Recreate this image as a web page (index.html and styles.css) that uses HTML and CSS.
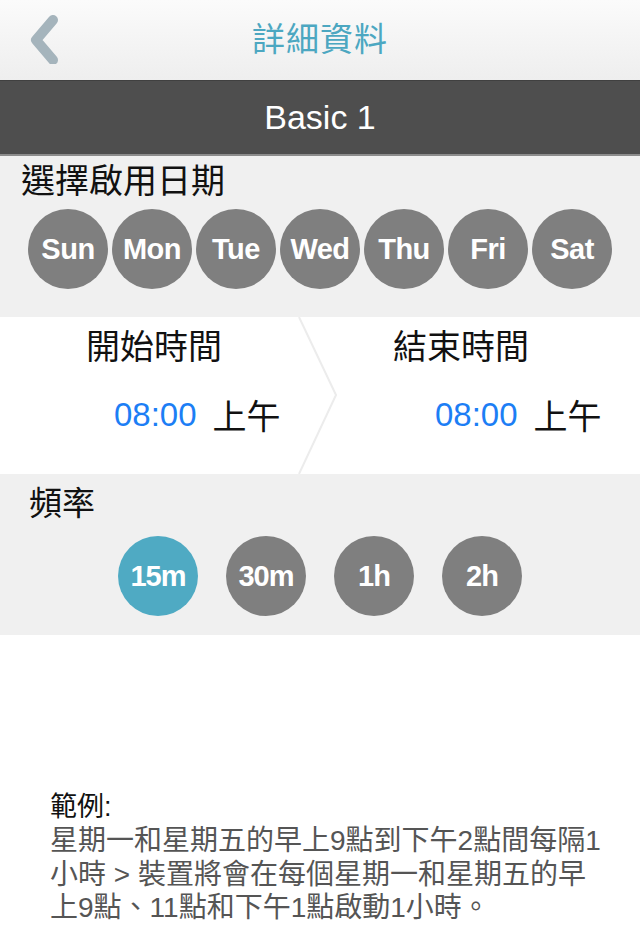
FILE: index.html
```html
<!DOCTYPE html>
<html lang="zh-Hant">
<head>
<meta charset="utf-8">
<title>詳細資料</title>
<link rel="stylesheet" href="styles.css">
</head>
<body>
<div class="screen">
  <header class="nav">
    <svg class="back" width="36" height="52" viewBox="0 0 36 52">
      <polyline points="27,8 10,28 27,48" fill="none" stroke="#a5b4bc" stroke-width="10" stroke-linecap="round" stroke-linejoin="round"/>
    </svg>
    <h1 class="nav-title">詳細資料</h1>
  </header>
  <div class="banner">Basic 1</div>

  <section class="days">
    <div class="label">選擇啟用日期</div>
    <div class="day-row">
      <span class="dot">Sun</span>
      <span class="dot">Mon</span>
      <span class="dot">Tue</span>
      <span class="dot">Wed</span>
      <span class="dot">Thu</span>
      <span class="dot">Fri</span>
      <span class="dot">Sat</span>
    </div>
  </section>

  <section class="times">
    <div class="col col-start">
      <div class="col-head">開始時間</div>
      <div class="time"><span class="hm">08:00</span><span class="ampm">上午</span></div>
    </div>
    <svg class="divider" width="40" height="157" viewBox="0 0 40 157">
      <polyline points="1,0 38,78 1,157" fill="none" stroke="#ececec" stroke-width="2"/>
    </svg>
    <div class="col col-end">
      <div class="col-head">結束時間</div>
      <div class="time"><span class="hm">08:00</span><span class="ampm">上午</span></div>
    </div>
  </section>

  <section class="freq">
    <div class="label label-freq">頻率</div>
    <div class="freq-row">
      <span class="dot active">15m</span>
      <span class="dot">30m</span>
      <span class="dot">1h</span>
      <span class="dot">2h</span>
    </div>
  </section>

  <section class="example">
    <div class="ex-title">範例:</div>
    <p class="ex-text">星期一和星期五的早上9點到下午2點間每隔1<br>小時 &gt; 裝置將會在每個星期一和星期五的早<br>上9點、11點和下午1點啟動1小時。</p>
  </section>
</div>
</body>
</html>
```

FILE: styles.css
```css
* { box-sizing: border-box; }
html, body { margin: 0; padding: 0; background: #fff; }
body {
  font-family: "Liberation Sans", "Noto Sans CJK TC", sans-serif;
  width: 640px;
  height: 938px;
  overflow: hidden;
}
.screen { width: 640px; }

.nav {
  position: relative;
  height: 80px;
  background: linear-gradient(#fbfbfb, #eeeeee);
  display: flex;
  align-items: center;
  justify-content: center;
}
.back { position: absolute; left: 26px; top: 12px; }
.nav-title {
  margin: 0 0 6px;
  font-weight: normal;
  font-size: 33px;
  color: #4ca7c1;
  font-family: "Noto Sans CJK TC", sans-serif;
  letter-spacing: 1px;
}

.banner {
  height: 76px;
  background: #4e4e4e;
  border-top: 1px solid #404040;
  border-bottom: 2px solid #8c8c8c;
  color: #fff;
  font-size: 34px;
  display: flex;
  align-items: center;
  justify-content: center;
}

.days {
  background: #f0f0f0;
  height: 161px;
  padding: 0 0 0 21px;
}
.label {
  font-family: "Noto Sans CJK TC", sans-serif;
  font-size: 34px;
  line-height: 46px;
  color: #111;
  padding-top: 0;
}
.day-row {
  display: flex;
  gap: 4px;
  padding-left: 7px;
  margin-top: 7px;
}
.dot {
  width: 80px;
  height: 80px;
  border-radius: 50%;
  background: #7f7f7f;
  color: #fff;
  font-weight: bold;
  font-size: 29px;
  display: flex;
  align-items: center;
  justify-content: center;
  letter-spacing: -0.5px;
}
.dot.active { background: #4faac3; }

.times {
  height: 157px;
  background: #fff;
  display: flex;
}
.col { display: flex; flex-direction: column; }
.col-start { width: 298px; padding-left: 86px; }
.col-end { flex: 1; padding-left: 55px; }
.divider { flex: none; }
.col-head {
  font-family: "Noto Sans CJK TC", sans-serif;
  font-size: 34px;
  line-height: 46px;
  color: #111;
  margin-top: 5px;
}
.time {
  display: flex;
  align-items: center;
  gap: 16px;
  margin-top: 22px;
}
.col-start .time { padding-left: 28px; }
.col-end .time { padding-left: 42px; }
.hm { color: #1c7ef5; font-size: 33px; }
.ampm {
  font-family: "Noto Sans CJK TC", sans-serif;
  font-size: 34px;
  color: #111;
}

.freq {
  background: #f0f0f0;
  height: 161px;
}
.label-freq { padding-left: 29px; padding-top: 4px; font-size: 33px; }
.freq-row {
  display: flex;
  gap: 28px;
  padding-left: 118px;
  margin-top: 12px;
}
.freq-row .dot { font-size: 29px; letter-spacing: -1px; }

.example {
  padding: 156px 0 0 50px;
}
.ex-title {
  font-size: 27px;
  line-height: 32px;
  color: #111;
  font-family: "Liberation Sans", "Noto Sans CJK TC", sans-serif;
}
.ex-text {
  margin: 1px 0 0;
  font-size: 28px;
  line-height: 33.5px;
  color: #555;
  white-space: nowrap;
}
```
